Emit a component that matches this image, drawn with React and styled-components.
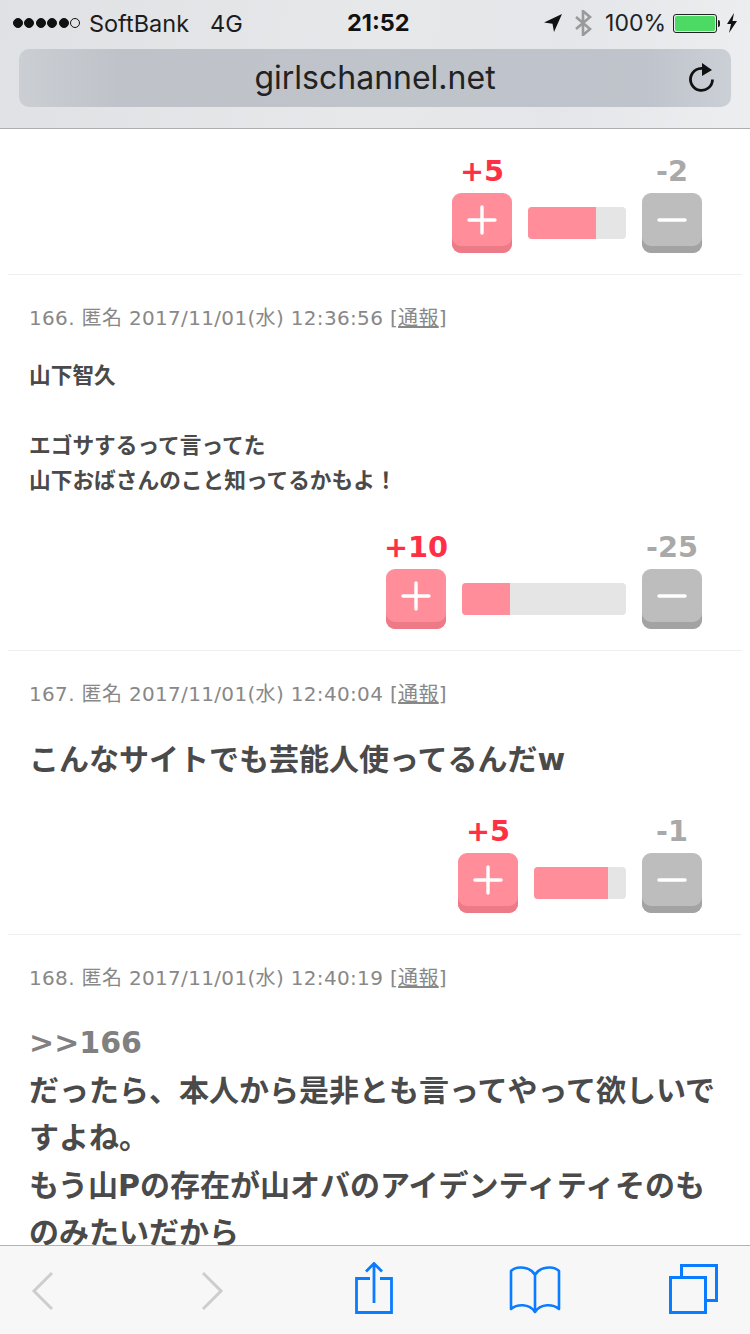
import React from "react";
import styled, { createGlobalStyle } from "styled-components";

const Global = createGlobalStyle`
  html, body { margin: 0; padding: 0; background: #fff; }
  * { box-sizing: border-box; }
`;
const Page = styled.div`
  width: 750px; height: 1334px; display: flex; flex-direction: column; overflow: hidden;
  font-family: "DejaVu Sans", "Noto Sans CJK JP", sans-serif;
`;
const Header = styled.header`
  height: 129px; flex: none; border-bottom: 1px solid #adadad;
  background: linear-gradient(100deg, #dfe1e4 0%, #e6e8ea 50%, #e4e6e9 75%, #eceef0 100%);
  padding: 0 19px; display: flex; flex-direction: column;
`;
const Status = styled.div`
  height: 49px; display: flex; align-items: center; justify-content: space-between;
  font-family: Inter, "Liberation Sans", sans-serif; font-size: 23.5px; color: #1c1c1c; position: relative;
  margin: 0 -6px 0 -6px; padding-bottom: 3px;
`;
const StatusSide = styled.div`
  display: flex; align-items: center; gap: ${p => p.$gap || 0}px;
`;
const Dots = styled.div`display: flex; gap: 1.4px; margin-right: 9px;`;
const Dot = styled.span`
  width: 10px; height: 10px; border-radius: 50%;
  background: ${p => (p.$off ? "transparent" : "#111")};
  border: 1px solid #111;
`;
const Net = styled.span`margin-left: 21px;`;
const Time = styled.span`
  position: absolute; left: 334px; top: 8px; font-weight: 700; font-size: 23.5px; color: #111;
`;
const Pct = styled.span`font-size: 23px; color: #222; margin: 0 7px 0 13px;`;
const Battery = styled.div`
  width: 44px; height: 19px; border: 1px solid #222; border-radius: 3px; padding: 1px; margin-right: 1px;
`;
const BatteryFill = styled.div`width: 100%; height: 100%; background: #4cd964; border-radius: 2px;`;
const BatteryNub = styled.span`width: 2px; height: 7px; background: #222; border-radius: 0 2px 2px 0; margin-right: 7px;`;
const UrlBar = styled.div`
  height: 58px; border-radius: 10px; display: flex; align-items: center; justify-content: center; position: relative;
  background: linear-gradient(90deg, #cbced3 0%, #bfc3c9 14%, #bfc3ca 50%, #bfc4cc 88%, #cbd0d7 100%);
  font-family: Inter, "Liberation Sans", sans-serif; font-size: 32px; color: #222; padding-bottom: 2px;
`;
const Reload = styled.svg`position: absolute; right: 15px; top: 12px;`;
const Main = styled.main`flex: 1; min-height: 0; overflow: hidden; background: #fff;`;
const Comment = styled.section`
  margin: 0 8px; border-bottom: 1px solid #efefef; padding: ${p => p.$top ?? 29}px 21px 21px 21px;
  display: flex; flex-direction: column;
`;
const Meta = styled.div`
  font-size: 20px; line-height: 28px; color: #888; white-space: nowrap; letter-spacing: 0.33px;
`;
const Report = styled.span`text-decoration: underline;`;
const Body = styled.div`
  margin-top: ${p => p.$mt}px; font-weight: 700; color: #4a4a4a; white-space: pre-wrap;
  font-size: ${p => p.$size}px; line-height: ${p => p.$lh}px;
`;
const Anchor = styled.span`color: #808080;`;
const Votes = styled.div`
  margin-top: ${p => p.$mt ?? 0}px; margin-right: 19px; display: flex; justify-content: flex-end; align-items: flex-end; gap: 16px;
`;
const VoteCol = styled.div`
  width: 60px; display: flex; flex-direction: column; align-items: center;
`;
const Count = styled.div`
  font-size: 28.8px; line-height: 32px; font-weight: 700; white-space: nowrap;
  color: ${p => (p.$up ? "#ff2f45" : "#a9a9a9")};
`;
const VoteButton = styled.div`
  width: 60px; height: 60px; border-radius: 9px; margin-top: 6px;
  display: flex; align-items: center; justify-content: center; padding-bottom: 6px;
  background: ${p => (p.$up ? "#ff8e9a" : "#bdbdbd")};
  box-shadow: inset 0 -7px 0 ${p => (p.$up ? "#ec7a87" : "#a3a3a3")};
`;
const Bar = styled.div`
  width: ${p => p.$w}px; height: 32px; margin-bottom: 14px; border-radius: 4px; overflow: hidden; background: #e5e5e5;
`;
const BarFill = styled.div`height: 100%; background: #ff8e9a;`;
const Toolbar = styled.footer`
  height: 89px; flex: none; background: #f7f7f7; border-top: 1px solid #b2b2b2; display: flex; position: relative;
`;
const ToolSlot = styled.div`
  position: absolute; left: ${p => p.$x}px; top: ${p => p.$y}px; line-height: 0;
`;

function Vote({ up, down, fill, width, mt }) {
  return (
    <Votes $mt={mt}>
      <VoteCol>
        <Count $up>+{up}</Count>
        <VoteButton $up>
          <svg width="30" height="30" viewBox="0 0 30 30"><path d="M15 2v26M2 15h26" stroke="#fff" strokeWidth="3.4" strokeLinecap="round" /></svg>
        </VoteButton>
      </VoteCol>
      <Bar $w={width}><BarFill style={{ width: fill }} /></Bar>
      <VoteCol>
        <Count>-{down}</Count>
        <VoteButton>
          <svg width="30" height="30" viewBox="0 0 30 30"><path d="M2 15h26" stroke="#fff" strokeWidth="3.4" strokeLinecap="round" /></svg>
        </VoteButton>
      </VoteCol>
    </Votes>
  );
}

function MetaLine({ n, time }) {
  return <Meta>{n}. 匿名 2017/11/01(水) {time} [<Report>通報</Report>]</Meta>;
}

export default function App() {
  return (
    <Page>
      <Global />
      <Header>
        <Status>
          <StatusSide>
            <Dots><Dot /><Dot /><Dot /><Dot /><Dot /><Dot $off /></Dots>
            <span>SoftBank</span><Net>4G</Net>
          </StatusSide>
          <Time>21:52</Time>
          <StatusSide>
            <svg width="20" height="20" viewBox="0 0 20 20" style={{ marginRight: 11 }}><path d="M19 1 1 9.500l8.500 1.200L11 19z" fill="#111" /></svg>
            <svg width="18" height="26" viewBox="0 0 18 26"><path d="M2 7l14 12-7 6V1l7 6L2 19" fill="none" stroke="#9a9a9a" strokeWidth="2.6" /></svg>
            <Pct>100%</Pct>
            <Battery><BatteryFill /></Battery>
            <BatteryNub />
            <svg width="10" height="20" viewBox="0 0 10 20"><path d="M7 0 0 11h4l-2 9 8-12H5.500z" fill="#111" /></svg>
          </StatusSide>
        </Status>
        <UrlBar>
          girlschannel.net
          <Reload width="28" height="32" viewBox="0 0 28 32">
            <path d="M20 9.500a11 11 0 1 0 4.500 9" fill="none" stroke="#111" strokeWidth="2.800" />
            <path d="M14 2l10 7-10 6z" fill="#111" />
          </Reload>
        </UrlBar>
      </Header>
      <Main>
        <Comment $top={26}><Vote up={5} down={2} width={98} fill={68} /></Comment>
        <Comment>
          <MetaLine n={166} time="12:36:56" />
          <Body $mt={26} $size={21.7} $lh={35}>{"山下智久\n\nエゴサするって言ってた\n山下おばさんのこと知ってるかもよ！"}</Body>
          <Vote mt={33} up={10} down={25} width={164} fill={48} />
        </Comment>
        <Comment>
          <MetaLine n={167} time="12:40:04" />
          <Body $mt={27} $size={30} $lh={50}>こんなサイトでも芸能人使ってるんだw</Body>
          <Vote mt={30} up={5} down={1} width={92} fill={74} />
        </Comment>
        <Comment>
          <MetaLine n={168} time="12:40:19" />
          <Body $mt={27} $size={30} $lh={47.5}>
            <Anchor>&gt;&gt;166</Anchor>{"\n"}だったら、本人から是非とも言ってやって欲しいですよね。{"\n"}もう山Pの存在が山オバのアイデンティティそのものみたいだから
          </Body>
        </Comment>
      </Main>
      <Toolbar>
        <ToolSlot $x={31} $y={25}><svg width="24" height="40" viewBox="0 0 24 40"><path d="M21 2 3 20l18 18" fill="none" stroke="#cdcdcd" strokeWidth="3" /></svg></ToolSlot>
        <ToolSlot $x={200} $y={25}><svg width="24" height="40" viewBox="0 0 24 40"><path d="M3 2l18 18L3 38" fill="none" stroke="#cdcdcd" strokeWidth="3" /></svg></ToolSlot>
        <ToolSlot $x={354} $y={16}><svg width="40" height="54" viewBox="0 0 40 54"><path d="M16 16.500H2.500v34h35v-34H26M20 41V2M12 9.500 20 1.500l8 8" fill="none" stroke="#0a7cff" strokeWidth="2.800" /></svg></ToolSlot>
        <ToolSlot $x={509} $y={19}><svg width="52" height="50" viewBox="0 0 52 50"><path d="M26 10C22 2 8 0 2 6v38c6-5 18-6 24 3 6-9 18-8 24-3V6C44 0 30 2 26 10zM26 10v37" fill="none" stroke="#0a7cff" strokeWidth="2.600" strokeLinejoin="round" /></svg></ToolSlot>
        <ToolSlot $x={668} $y={18}><svg width="52" height="50" viewBox="0 0 52 50"><path d="M2.500 13.500h35v35h-35zM13.500 13V1.500h35v35H38" fill="none" stroke="#0a7cff" strokeWidth="3" /></svg></ToolSlot>
      </Toolbar>
    </Page>
  );
}
